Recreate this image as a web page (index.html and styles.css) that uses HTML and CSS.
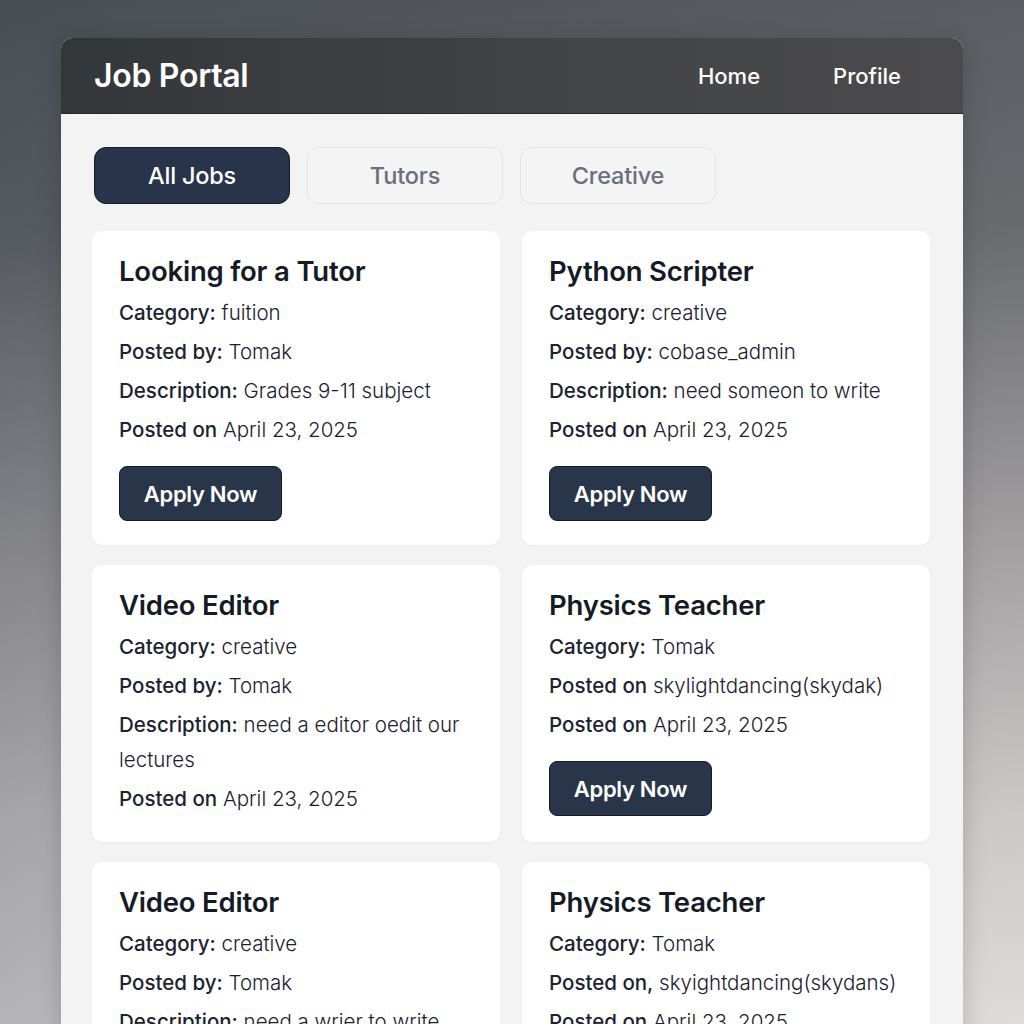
FILE: index.html
```html
<!DOCTYPE html>
<html lang="en">
<head>
<meta charset="utf-8">
<title>Job Portal</title>
<link rel="stylesheet" href="styles.css">
</head>
<body>
<div class="app">
  <header class="topbar">
    <div class="brand">Job Portal</div>
    <nav class="nav">
      <a href="#">Home</a>
      <a href="#">Profile</a>
    </nav>
  </header>
  <main class="content">
    <div class="tabs">
      <button class="tab active">All Jobs</button>
      <button class="tab">Tutors</button>
      <button class="tab">Creative</button>
    </div>
    <div class="grid">
      <article class="card">
        <h2>Looking for a Tutor</h2>
        <p><b>Category:</b> fuition</p>
        <p><b>Posted by:</b> Tomak</p>
        <p><b>Description:</b> Grades 9-11 subject</p>
        <p><b>Posted on</b> April 23, 2025</p>
        <button class="apply">Apply Now</button>
      </article>
      <article class="card">
        <h2>Python Scripter</h2>
        <p><b>Category:</b> creative</p>
        <p><b>Posted by:</b> cobase_admin</p>
        <p><b>Description:</b> need someon to write</p>
        <p><b>Posted on</b> April 23, 2025</p>
        <button class="apply">Apply Now</button>
      </article>
      <article class="card">
        <h2>Video Editor</h2>
        <p><b>Category:</b> creative</p>
        <p><b>Posted by:</b> Tomak</p>
        <p><b>Description:</b> need a editor oedit our lectures</p>
        <p><b>Posted on</b> April 23, 2025</p>
      </article>
      <article class="card">
        <h2>Physics Teacher</h2>
        <p><b>Category:</b> Tomak</p>
        <p><b>Posted on</b> skylightdancing(skydak)</p>
        <p><b>Posted on</b> April 23, 2025</p>
        <button class="apply">Apply Now</button>
      </article>
      <article class="card">
        <h2>Video Editor</h2>
        <p><b>Category:</b> creative</p>
        <p><b>Posted by:</b> Tomak</p>
        <p><b>Description:</b> need a wrier to write</p>
        <p><b>Posted on</b> April 23, 2025</p>
      </article>
      <article class="card">
        <h2>Physics Teacher</h2>
        <p><b>Category:</b> Tomak</p>
        <p><b>Posted on,</b> skyightdancing(skydans)</p>
        <p><b>Posted on</b> April 23, 2025</p>
        <button class="apply">Apply Now</button>
      </article>
    </div>
  </main>
</div>
</body>
</html>
```
FILE: styles.css
```css
* { box-sizing: border-box; }
html, body { height: 100%; }
body {
  margin: 0;
  padding-top: 38px;
  font-family: Inter, "Noto Sans", "Liberation Sans", sans-serif;
  background:
    linear-gradient(90deg, rgba(30, 42, 58, 0.22) 0%, rgba(30, 42, 58, 0.06) 50%, rgba(255, 255, 255, 0.03) 100%),
    linear-gradient(180deg, #55585d 0%, #64666a 22%, #a3a0a1 55%, #cbc7c7 80%, #dedada 100%);
  overflow: hidden;
}
.app {
  width: 902px;
  margin-left: 61px;
  border-radius: 12px 12px 0 0;
  overflow: hidden;
  background: #f3f3f3;
  box-shadow: 0 6px 24px rgba(0, 0, 0, 0.18);
}
.topbar {
  height: 76px;
  display: flex;
  align-items: center;
  justify-content: space-between;
  padding: 0 62px 0 33px;
  background: linear-gradient(90deg, #34373a 0%, #434446 60%, #4b4b4d 100%);
  border-bottom: 1px solid #262729;
}
.brand {
  color: #ffffff;
  font-size: 32px;
  font-weight: 600;
  letter-spacing: -0.3px;
}
.nav { display: flex; gap: 73px; }
.nav a {
  color: #ffffff;
  text-decoration: none;
  font-size: 22px;
  font-weight: 500;
}
.content {
  padding: 33px 33px 40px 31px;
}
.tabs {
  display: flex;
  gap: 17px;
  margin-left: 2px;
  margin-bottom: 27px;
}
.tab {
  width: 196px;
  height: 57px;
  border-radius: 12px;
  border: 1px solid #e4e4e6;
  background: #f4f4f5;
  color: #687080;
  font-family: inherit;
  font-size: 23.5px;
  font-weight: 500;
  letter-spacing: -0.2px;
}
.tab.active {
  background: #27344a;
  border-color: #161d29;
  color: #ffffff;
}
.grid {
  display: grid;
  grid-template-columns: 1fr 1fr;
  column-gap: 22px;
  row-gap: 20px;
}
.card {
  background: #ffffff;
  border-radius: 10px;
  padding: 22px 27px 22px 27px;
  box-shadow: 0 1px 3px rgba(0, 0, 0, 0.04);
  color: #1f2532;
}
.card h2 {
  margin: 0 0 6px 0;
  font-size: 27.5px;
  line-height: 36px;
  font-weight: 600;
  color: #151b26;
  letter-spacing: -0.2px;
}
.card p {
  margin: 0 0 4px 0;
  font-size: 20.5px;
  line-height: 35px;
  font-weight: 300;
  color: #1a2030;
}
.card p b {
  font-weight: 500;
  color: #1b2230;
}
.apply {
  display: block;
  margin: 19px 0 2px 0;
  width: 163px;
  height: 55px;
  border-radius: 8px;
  border: 1px solid #151c27;
  background: #29364a;
  color: #ffffff;
  font-family: inherit;
  font-size: 22px;
  font-weight: 600;
  letter-spacing: -0.3px;
}
```
